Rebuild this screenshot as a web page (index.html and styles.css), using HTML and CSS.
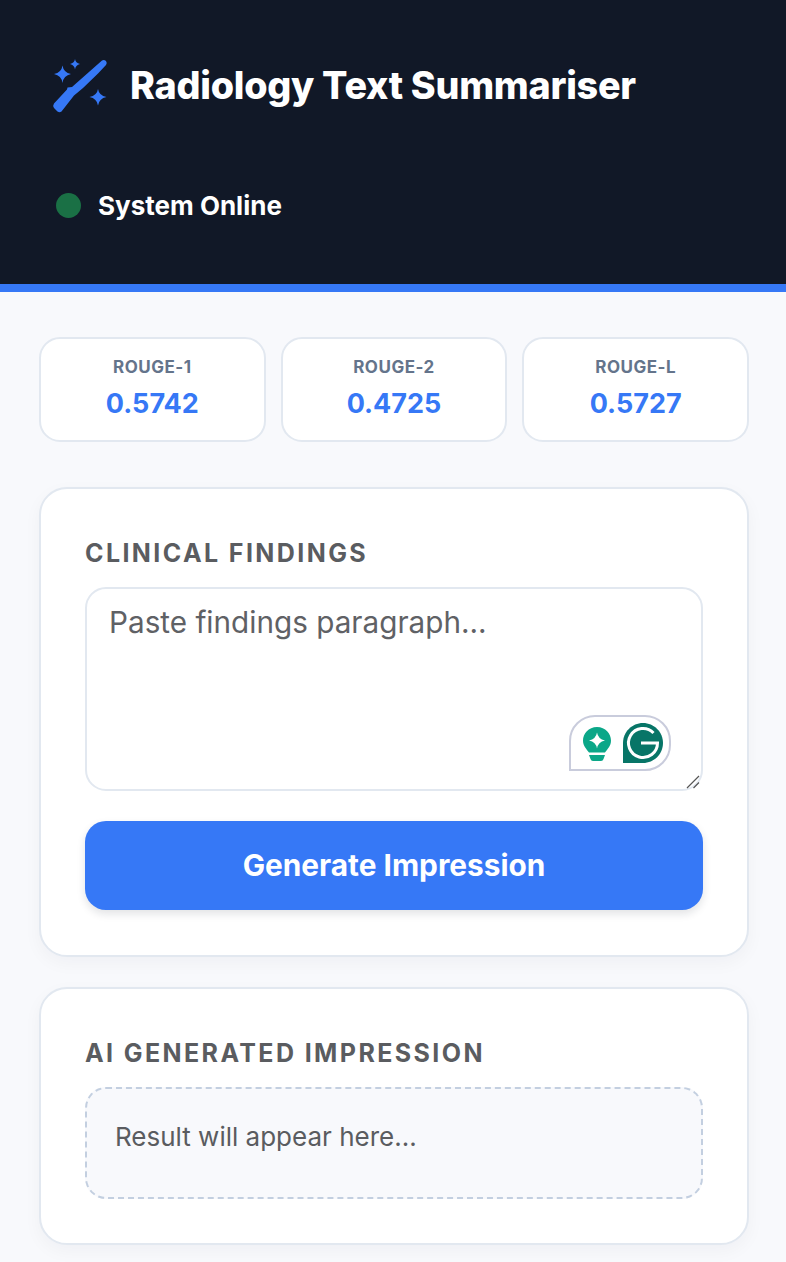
FILE: index.html
```html
<!DOCTYPE html>
<html lang="en">
<head>
<meta charset="utf-8">
<title>Radiology Text Summariser</title>
<link rel="stylesheet" href="styles.css">
</head>
<body>
<header class="topbar">
  <div class="brand">
    <svg class="wand" viewBox="0 0 60 60" width="60" height="60" aria-hidden="true">
      <path d="M2 47.500 L15 33.500 L15.500 31.500 L20 31 L50 4.500 Q52 3.300 54 5 Q55.500 7 54 9 L46 17.500 L31 32 L22 39.500 L9.500 55.500 Q7.500 57 5.500 55.500 L2 52 Q0.500 49.500 2 47.500Z" fill="#3678f6"/>
      <path d="M10.500 9.500 Q11.500 16.500 19 18 Q11.500 19.500 10.500 27 Q9.500 19.500 2 18 Q9.500 16.500 10.500 9.500Z" fill="#3678f6"/>
      <path d="M23 3 Q23.500 7 28 8 Q23.500 9 23 13.500 Q22.500 9 18 8 Q22.500 7 23 3Z" fill="#3678f6"/>
      <path d="M46 33 Q47 39.500 54.500 41 Q47 42.500 46 49.500 Q45 42.500 37.500 41 Q45 39.500 46 33Z" fill="#3678f6"/>
    </svg>
    <h1 class="title">Radiology Text Summariser</h1>
  </div>
  <div class="status">
    <span class="dot"></span>
    <span class="status-text">System Online</span>
  </div>
</header>
<main class="content">
  <section class="metrics">
    <div class="metric"><div class="metric-label">ROUGE-1</div><div class="metric-value">0.5742</div></div>
    <div class="metric"><div class="metric-label">ROUGE-2</div><div class="metric-value">0.4725</div></div>
    <div class="metric"><div class="metric-label">ROUGE-L</div><div class="metric-value">0.5727</div></div>
  </section>
  <section class="card card-input">
    <h2 class="card-title">CLINICAL FINDINGS</h2>
    <div class="field">
      <textarea class="findings" placeholder="Paste findings paragraph..."></textarea>
      <div class="grammarly">
        <svg class="bulb" viewBox="0 0 30 36" width="30" height="36" aria-hidden="true">
          <path d="M15 1 C6.500 1 1 7.500 1 14.500 C1 20 4.500 23 7 26.500 H23 C25.500 23 29 20 29 14.500 C29 7.500 23.500 1 15 1Z" fill="#0ba788"/>
          <path d="M15 6.500 Q16 13 23 14.500 Q16 16 15 22.500 Q14 16 7 14.500 Q14 13 15 6.500Z" fill="#fff"/>
          <path d="M7 29 H23 L21.500 33 Q21 35 19 35 H11 Q9 35 8.500 33Z" fill="#0ba788"/>
        </svg>
        <svg class="gmark" viewBox="0 0 42 42" width="42" height="42" aria-hidden="true">
          <path d="M21 1 C32 1 41 10 41 21 C41 32 32 41 21 41 H1 V21 C1 10 10 1 21 1Z" fill="#077567"/>
          <path d="M31.500 11 A14.500 14.500 0 1 0 35.500 21 H19" fill="none" stroke="#fff" stroke-width="3"/>
        </svg>
      </div>
      <svg class="grip" viewBox="0 0 14 14" width="14" height="14" aria-hidden="true">
        <path d="M1 13 L13 1 M7.500 13 L13 7.500" stroke="#555" stroke-width="1.200" fill="none"/>
      </svg>
    </div>
    <button class="generate" type="button">Generate Impression</button>
  </section>
  <section class="card card-output">
    <h2 class="card-title">AI GENERATED IMPRESSION</h2>
    <div class="result">Result will appear here...</div>
  </section>
</main>
</body>
</html>
```
FILE: styles.css
```css
* { box-sizing: border-box; }
html, body { margin: 0; padding: 0; }
body {
  width: 786px;
  height: 1262px;
  overflow: hidden;
  background: #f8f9fc;
  font-family: Inter, "Liberation Sans", sans-serif;
  color: #5a5c60;
}
.topbar {
  height: 292px;
  background: #111827;
  border-bottom: 8px solid #3678f6;
  padding: 55px 52px 0;
}
.brand { display: flex; align-items: center; gap: 18px; height: 60px; }
.wand { flex: none; margin-top: 2px; }
.title {
  margin: 0;
  font-size: 37.700px;
  font-weight: 800;
  color: #fff;
  letter-spacing: -0.25px;
  white-space: nowrap;
}
.status {
  display: flex;
  align-items: center;
  gap: 17px;
  margin-top: 72px;
  margin-left: 4px;
  height: 36px;
}
.dot { width: 25px; height: 25px; border-radius: 50%; background: #1a7045; }
.status-text { color: #fff; font-size: 26px; font-weight: 700; }
.content { padding: 45px 37px 0 39px; }
.metrics { display: grid; grid-template-columns: repeat(3, 1fr); gap: 15px; }
.metric {
  height: 105px;
  background: #fff;
  border: 2px solid #e2e8f0;
  border-radius: 21px;
  text-align: center;
  padding-top: 17px;
}
.metric-label { font-size: 17px; font-weight: 700; color: #64748b; line-height: 22px; letter-spacing: 0.5px; }
.metric-value { font-size: 27px; font-weight: 700; color: #3678f6; line-height: 34px; margin-top: 9px; }
.card {
  background: #fff;
  border: 2px solid #e2e8f0;
  border-radius: 28px;
  padding: 44px;
  box-shadow: 0 6px 18px rgba(15, 23, 42, 0.04);
}
.card-input { height: 470px; margin-top: 45px; }
.card-output { height: 258px; margin-top: 30px; }
.card-title {
  margin: 0;
  font-size: 25px;
  line-height: 30px;
  font-weight: 700;
  letter-spacing: 2.4px;
  color: #5a5c60;
  padding-top: 5px;
  white-space: nowrap;
}
.field { position: relative; margin-top: 19px; height: 204px; }
.findings {
  display: block;
  width: 100%;
  height: 100%;
  border: 2px solid #e2e8f0;
  border-radius: 21px;
  background: #fff;
  padding: 15px 22px;
  font-family: inherit;
  font-size: 29.700px;
  line-height: 36px;
  color: #5a5c60;
  outline: none;
  resize: none;
}
.findings::placeholder { color: #5f6165; opacity: 1; }
.grammarly {
  position: absolute;
  left: 484px;
  top: 128px;
  width: 102px;
  height: 56px;
  border: 2px solid #c9ccdc;
  border-radius: 26px 26px 26px 0;
  background: #fff;
}
.bulb { position: absolute; left: 11px; top: 9px; }
.gmark { position: absolute; left: 51px; top: 5px; }
.grip { position: absolute; left: 601px; top: 188px; }
.generate {
  display: block;
  width: 100%;
  height: 89px;
  margin-top: 30px;
  padding: 0 0 2px;
  border: 0;
  border-radius: 21px;
  background: #3678f6;
  color: #fff;
  font-family: inherit;
  font-size: 29.800px;
  font-weight: 700;
  box-shadow: 0 4px 8px rgba(15, 23, 42, 0.12);
}
.result {
  margin-top: 19px;
  height: 112px;
  background: #f8f9fc;
  border: 2px dashed #c3cfe0;
  border-radius: 21px;
  padding: 30px 28px;
  font-size: 26px;
  line-height: 36px;
  color: #5a5c60;
}
```
